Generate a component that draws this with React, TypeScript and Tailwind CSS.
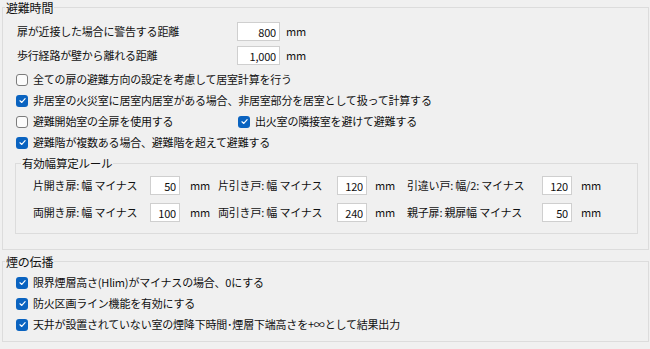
import React from "react";

// Windows 風の設定パネル（避難時間 / 煙の伝播）

function CheckBox({ checked }: { checked: boolean }): React.ReactElement {
    if (!checked) {
        return <span className="h-[12px] w-[12px] shrink-0 rounded-[3px] border border-[#7c7c7c] bg-[#fbfbfb]" />;
    }
    return (
        <span className="flex h-[12px] w-[12px] shrink-0 items-center justify-center rounded-[3px] bg-[#0a63c0]">
            <svg viewBox="0 0 10 10" className="h-[9px] w-[9px]">
                <path d="M2.2 5.3 L4.2 7.2 L7.9 3" fill="none" stroke="#ffffff" strokeWidth="1.3" strokeLinecap="round" strokeLinejoin="round" />
            </svg>
        </span>
    );
}

function CheckRow({ checked, label, h = "h-[21px]" }: { checked: boolean; label: string; h?: string }): React.ReactElement {
    return (
        <div className={`flex items-center gap-[5px] ${h}`}>
            <CheckBox checked={checked} />
            <span className="whitespace-nowrap">{label}</span>
        </div>
    );
}

function NumBox({ value, w }: { value: string; w: string }): React.ReactElement {
    return (
        <input
            readOnly
            value={value}
            className={`h-[19px] border border-[#cfcfcf] bg-white pr-[3px] text-right text-[11px] leading-[17px] outline-none ${w}`}
        />
    );
}

const RULES: [string, string, string, string, string, string][] = [
    ["片開き扉: 幅 マイナス", "50", "片引き戸: 幅 マイナス", "120", "引違い戸: 幅/2: マイナス", "120"],
    ["両開き扉: 幅 マイナス", "100", "両引き戸: 幅 マイナス", "240", "親子扉: 親扉幅 マイナス", "50"],
];

export default function App(): React.ReactElement {
    return (
        <div className="h-[349px] w-[650px] overflow-hidden bg-[#f0f0f0] pt-px font-['Noto_Sans_CJK_JP','Noto_Sans',sans-serif] text-[11px] leading-[13px] tracking-[-0.2px] text-[#111]">
            <fieldset className="ml-[2px] w-[647px] border border-[#dcdcdc] px-[2px] pb-[15px]">
                <legend className="px-px text-[12px] leading-[13px]">避難時間</legend>
                <div className="flex flex-col pl-[11px] pr-[8px] pt-[8px]">
                    <div className="flex h-[19px] items-center">
                        <span className="ml-px w-[220px] whitespace-nowrap">扉が近接した場合に警告する距離</span>
                        <NumBox value="800" w="w-[43px]" />
                        <span className="ml-[6px]">mm</span>
                    </div>
                    <div className="mt-[5px] flex h-[19px] items-center">
                        <span className="ml-px w-[220px] whitespace-nowrap">歩行経路が壁から離れる距離</span>
                        <NumBox value="1,000" w="w-[43px]" />
                        <span className="ml-[6px]">mm</span>
                    </div>

                    <div className="mt-[4px] flex flex-col">
                        <CheckRow checked={false} label="全ての扉の避難方向の設定を考慮して居室計算を行う" />
                        <CheckRow checked label="非居室の火災室に居室内居室がある場合、非居室部分を居室として扱って計算する" />
                        <div className="flex h-[21px] items-center">
                            <div className="w-[222px]">
                                <CheckRow checked={false} label="避難開始室の全扉を使用する" />
                            </div>
                            <CheckRow checked label="出火室の隣接室を避けて避難する" />
                        </div>
                        <CheckRow checked label="避難階が複数ある場合、避難階を超えて避難する" />
                    </div>

                    <fieldset className="-ml-px mt-[4px] w-[623px] border border-[#dcdcdc] px-[5px] pb-[11px]">
                        <legend className="px-px text-[11.5px] leading-[13px]">有効幅算定ルール</legend>
                        <div className="grid grid-cols-[117px_30px_38px_119px_30px_40px_135px_30px_auto] gap-y-[8px] pl-[12px] pt-[6px]">
                            {RULES.map((r) => (
                                <React.Fragment key={r[0]}>
                                    <span className="self-center whitespace-nowrap">{r[0]}</span>
                                    <NumBox value={r[1]} w="w-[30px]" />
                                    <span className="self-center pl-[10px]">mm</span>
                                    <span className="self-center whitespace-nowrap">{r[2]}</span>
                                    <NumBox value={r[3]} w="w-[30px]" />
                                    <span className="self-center pl-[8px]">mm</span>
                                    <span className="self-center whitespace-nowrap">{r[4]}</span>
                                    <NumBox value={r[5]} w="w-[30px]" />
                                    <span className="self-center pl-[9px]">mm</span>
                                </React.Fragment>
                            ))}
                        </div>
                    </fieldset>
                </div>
            </fieldset>

            <fieldset className="ml-[2px] mt-[5px] w-[647px] border border-[#dcdcdc] px-[2px] pb-[6px]">
                <legend className="px-px text-[12px] leading-[13px]">煙の伝播</legend>
                <div className="flex flex-col pl-[11px] pt-[4px]">
                    <CheckRow checked label="限界煙層高さ(Hlim)がマイナスの場合、0にする" />
                    <CheckRow checked label="防火区画ライン機能を有効にする" />
                    <CheckRow checked label="天井が設置されていない室の煙降下時間･煙層下端高さを+∞として結果出力" />
                </div>
            </fieldset>
        </div>
    );
}
